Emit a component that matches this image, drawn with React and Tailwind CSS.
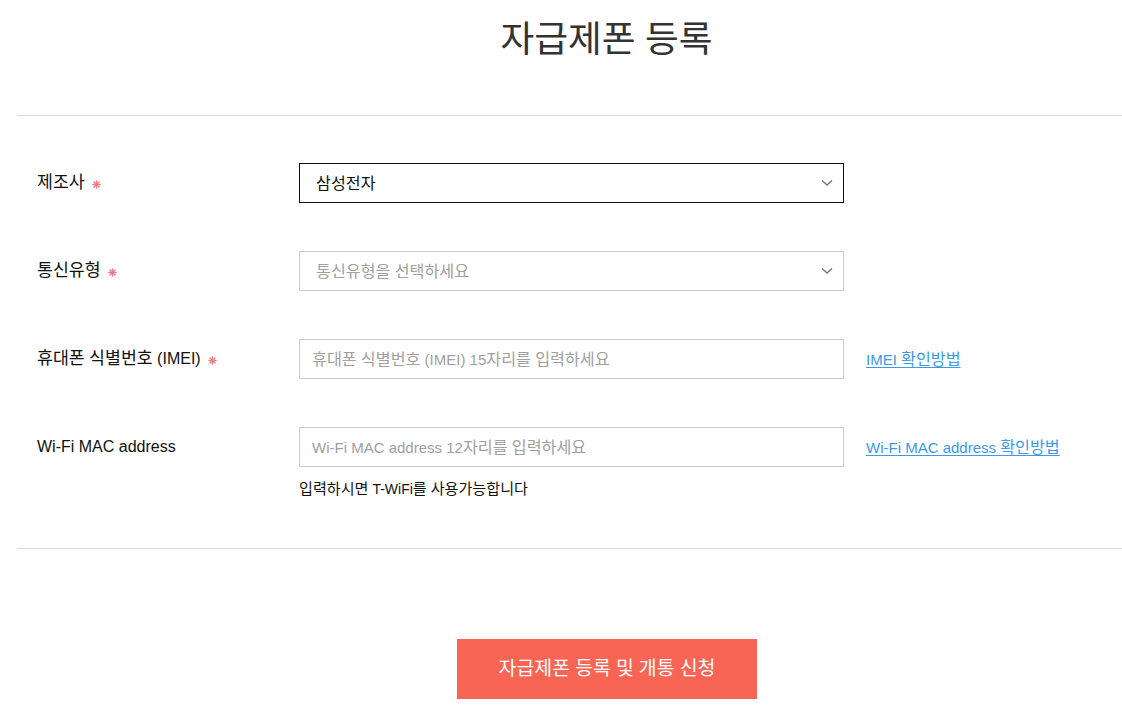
import React from "react";

const FONT = { fontFamily: '"Liberation Sans", "Noto Sans CJK KR", sans-serif' };

function K({ children }) {
  const parts = String(children).split(/([\uac00-\ud7a3]+)/);
  return (
    <span>
      {parts.map((p, i) =>
        /[\uac00-\ud7a3]/.test(p) ? (
          <span key={i} className="text-[1.08em]">{p}</span>
        ) : (
          <React.Fragment key={i}>{p}</React.Fragment>
        )
      )}
    </span>
  );
}

function Required() {
  return (
    <svg width="9" height="9" viewBox="0 0 10 10" className="ml-[7px] mt-[2px] shrink-0">
      <g stroke="#f47a86" strokeWidth="1.5" strokeLinecap="round">
        <line x1="5" y1="1" x2="5" y2="9" />
        <line x1="1" y1="5" x2="9" y2="5" />
        <line x1="2.2" y1="2.2" x2="7.8" y2="7.8" />
        <line x1="7.8" y1="2.2" x2="2.2" y2="7.8" />
      </g>
    </svg>
  );
}

function Chevron() {
  return (
    <svg width="12" height="7" viewBox="0 0 12 7" className="absolute right-[10px] top-1/2 -translate-y-1/2">
      <path d="M1 1l5 4.5L11 1" fill="none" stroke="#777" strokeWidth="1.4" />
    </svg>
  );
}

function Label({ children, required }) {
  return (
    <div className="flex items-center h-10 w-[262px] text-[16px] text-[#111] whitespace-nowrap">
      <K>{children}</K>
      {required && <Required />}
    </div>
  );
}

function Field({ label, required, children, link, helper }) {
  return (
    <div className="flex items-start">
      <Label required={required}>{label}</Label>
      <div className="flex flex-col">
        <div className="flex items-center">
          {children}
          {link && (
            <a href="#" className="ml-[22px] text-[15px] text-[#3c9ae8] underline underline-offset-2 whitespace-nowrap">
              <K>{link}</K>
            </a>
          )}
        </div>
        {helper && (
          <p className="mt-[13px] text-[14px] leading-[18px] text-[#111] whitespace-nowrap">
            <K>{helper}</K>
          </p>
        )}
      </div>
    </div>
  );
}

function SelectBox({ value, placeholder, active }) {
  return (
    <div
      className={`relative w-[545px] h-10 border flex items-center pl-[16px] text-[15px] whitespace-nowrap ${
        active ? "border-[#111] text-[#111]" : "border-[#cccccc] text-[#a0a0a0]"
      }`}
    >
      <K>{value || placeholder}</K>
      <Chevron />
    </div>
  );
}

function TextBox({ placeholder }) {
  return (
    <div className="w-[545px] h-10 border border-[#cccccc] flex items-center pl-[12px] text-[15px] text-[#a0a0a0] whitespace-nowrap">
      <K>{placeholder}</K>
    </div>
  );
}

export default function App() {
  return (
    <div className="w-[1122px] h-[719px] overflow-hidden bg-white" style={FONT}>
      <div className="h-[115px] flex justify-center pl-[91px] pt-[18px]">
        <h1 className="text-[34px] leading-[44px] text-[#333] font-normal whitespace-nowrap">
          <K>자급제폰 등록</K>
        </h1>
      </div>

      <div className="ml-[17px] border-t border-[#d4d4d4] pl-[20px] pt-[47px] pb-[50px] flex flex-col gap-[48px]">
        <Field label="제조사" required>
          <SelectBox value="삼성전자" active />
        </Field>

        <Field label="통신유형" required>
          <SelectBox placeholder="통신유형을 선택하세요" />
        </Field>

        <Field label="휴대폰 식별번호 (IMEI)" required link="IMEI 확인방법">
          <TextBox placeholder="휴대폰 식별번호 (IMEI) 15자리를 입력하세요" />
        </Field>

        <Field
          label="Wi-Fi MAC address"
          link="Wi-Fi MAC address 확인방법"
          helper="입력하시면 T-WiFi를 사용가능합니다"
        >
          <TextBox placeholder="Wi-Fi MAC address 12자리를 입력하세요" />
        </Field>
      </div>

      <div className="ml-[17px] border-t border-[#d4d4d4] pt-[90px] pl-[440px]">
        <button className="w-[300px] h-[60px] bg-[#f86555] text-white text-[18px] whitespace-nowrap">
          <K>자급제폰 등록 및 개통 신청</K>
        </button>
      </div>
    </div>
  );
}
